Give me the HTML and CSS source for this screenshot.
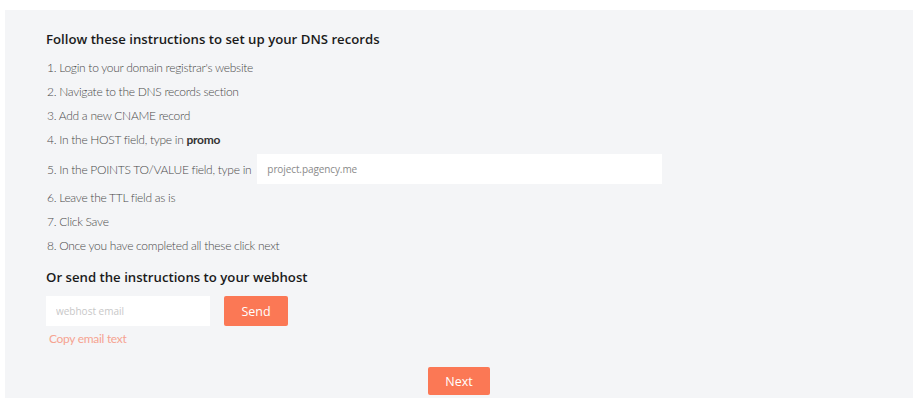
FILE: index.html
```html
<!DOCTYPE html>
<html lang="en">
<head>
    <meta charset="UTF-8">
    <meta name="viewport" content="width=device-width, initial-scale=1.0">
    <title>DNS setup</title>
    <link rel="stylesheet" href="styles.css">
</head>
<body>
    <div class="panel">
        <h2 class="heading">Follow these instructions to set up your DNS records</h2>
        <ol class="steps">
            <li>1. Login to your domain registrar's website</li>
            <li>2. Navigate to the DNS records section</li>
            <li>3. Add a new CNAME record</li>
            <li>4. In the HOST field, type in <b>promo</b></li>
            <li class="with-field">5. In the POINTS TO/VALUE field, type in
                <input class="value-field" type="text" value="project.pagency.me" readonly>
            </li>
            <li>6. Leave the TTL field as is</li>
            <li>7. Click Save</li>
            <li>8. Once you have completed all these click next</li>
        </ol>

        <h2 class="heading sub">Or send the instructions to your webhost</h2>
        <div class="send-row">
            <input class="email-field" type="text" placeholder="webhost email">
            <button class="btn">Send</button>
        </div>
        <a href="#" class="copy-link">Copy email text</a>

        <div class="next-row">
            <button class="btn next">Next</button>
        </div>
    </div>
</body>
</html>
```

FILE: styles.css
```css
* {
    margin: 0;
    padding: 0;
    box-sizing: border-box;
}
body {
    background: white;
    padding: 10px 7px 0 5px;
    font-family: 'Lato', sans-serif;
}
.panel {
    background: #f4f5f7;
    padding: 20px 41px 3px 41px;
    height: 388px;
}
.heading {
    font-family: 'Open Sans', sans-serif;
    font-size: 13.2px;
    font-weight: 600;
    color: #1b1b1b;
    line-height: 18px;
}
.steps {
    list-style: none;
    margin-top: 12px;
    padding-left: 1px;
}
.steps li {
    font-size: 12px;
    font-weight: 300;
    color: #4a4a4a;
    letter-spacing: -0.28px;
    line-height: 15px;
    margin-bottom: 9px;
}
.steps li b {
    font-weight: 700;
    color: #333;
}
.steps li.with-field {
    display: flex;
    align-items: center;
    margin-top: -2px;
    margin-bottom: 6px;
}
.value-field {
    margin-left: 6px;
    width: 405px;
    height: 30px;
    border: none;
    background: white;
    padding: 0 10px;
    font-family: 'Open Sans', sans-serif;
    font-size: 10px;
    letter-spacing: -0.1px;
    color: #8a8a8a;
    outline: none;
}
.heading.sub {
    margin-top: 15px;
}
.send-row {
    display: flex;
    gap: 14px;
    margin-top: 10px;
}
.email-field {
    width: 164px;
    height: 30px;
    border: none;
    background: white;
    padding: 0 10px;
    font-family: 'Open Sans', sans-serif;
    font-size: 10px;
    outline: none;
}
.email-field::placeholder {
    color: #c8c8c8;
}
.btn {
    background: #fb7855;
    color: white;
    border: none;
    border-radius: 2px;
    font-family: 'Open Sans', sans-serif;
    font-size: 12.5px;
    width: 64px;
    height: 30px;
    cursor: pointer;
}
.copy-link {
    display: block;
    margin: 5px 0 0 3px;
    font-size: 12px;
    letter-spacing: -0.3px;
    color: #f6a391;
    text-decoration: none;
    line-height: 15px;
}
.next-row {
    display: flex;
    justify-content: center;
    margin-top: 21px;
}
.btn.next {
    width: 62px;
    height: 28px;
}
```
